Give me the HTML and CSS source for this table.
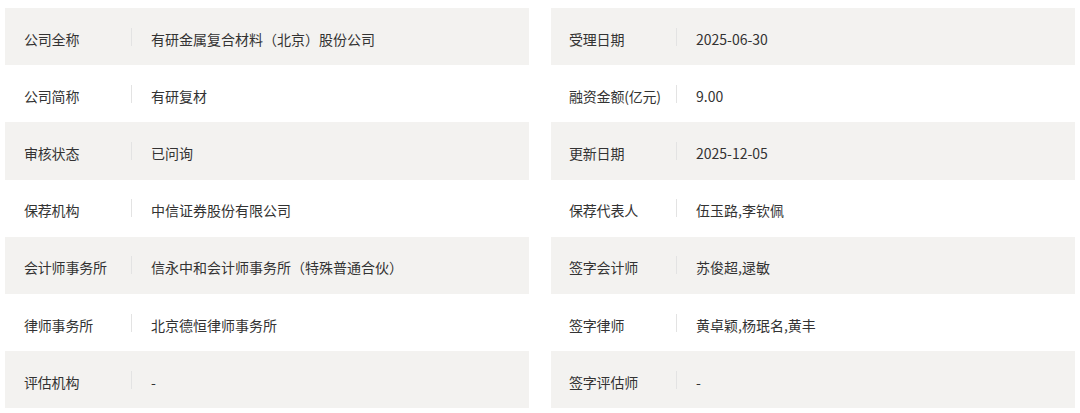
FILE: index.html
```html
<!DOCTYPE html>
<html lang="zh-CN">
<head>
<meta charset="utf-8">
<link rel="stylesheet" href="styles.css">
</head>
<body>
<div class="info">
  <div class="col">
    <div class="row"><div class="label">公司全称</div><div class="value">有研金属复合材料（北京）股份公司</div></div>
    <div class="row"><div class="label">公司简称</div><div class="value">有研复材</div></div>
    <div class="row"><div class="label">审核状态</div><div class="value">已问询</div></div>
    <div class="row"><div class="label">保荐机构</div><div class="value">中信证券股份有限公司</div></div>
    <div class="row"><div class="label">会计师事务所</div><div class="value">信永中和会计师事务所（特殊普通合伙）</div></div>
    <div class="row"><div class="label">律师事务所</div><div class="value">北京德恒律师事务所</div></div>
    <div class="row"><div class="label">评估机构</div><div class="value">-</div></div>
  </div>
  <div class="col right">
    <div class="row"><div class="label">受理日期</div><div class="value">2025-06-30</div></div>
    <div class="row"><div class="label">融资金额(亿元)</div><div class="value">9.00</div></div>
    <div class="row"><div class="label">更新日期</div><div class="value">2025-12-05</div></div>
    <div class="row"><div class="label">保荐代表人</div><div class="value">伍玉路,李钦佩</div></div>
    <div class="row"><div class="label">签字会计师</div><div class="value">苏俊超,逯敏</div></div>
    <div class="row"><div class="label">签字律师</div><div class="value">黄卓颖,杨珉名,黄丰</div></div>
    <div class="row"><div class="label">签字评估师</div><div class="value">-</div></div>
  </div>
</div>
</body>
</html>
```

FILE: styles.css
```css
html, body {
  margin: 0;
  padding: 0;
  background: #ffffff;
}
body {
  font-family: "Noto Sans CJK SC", "Noto Sans", sans-serif;
  font-size: 14px;
  color: #333333;
}
.info {
  display: grid;
  grid-template-columns: 524px 524px;
  column-gap: 22px;
  padding: 8px 5px 0 5px;
}
.col {
  display: flex;
  flex-direction: column;
}
.row {
  display: flex;
  align-items: center;
  height: 57.2px;
  padding-left: 19px;
}
.right .row {
  padding-left: 18px;
}
.row:nth-child(odd) {
  background: #f3f2f0;
}
.label {
  width: 107px;
  flex: none;
  height: 18px;
  line-height: 22px;
  white-space: nowrap;
  letter-spacing: -0.2px;
}
.value {
  border-left: 1px solid #e3e3e3;
  padding-left: 19px;
  height: 18px;
  line-height: 22px;
  white-space: nowrap;
}
```
